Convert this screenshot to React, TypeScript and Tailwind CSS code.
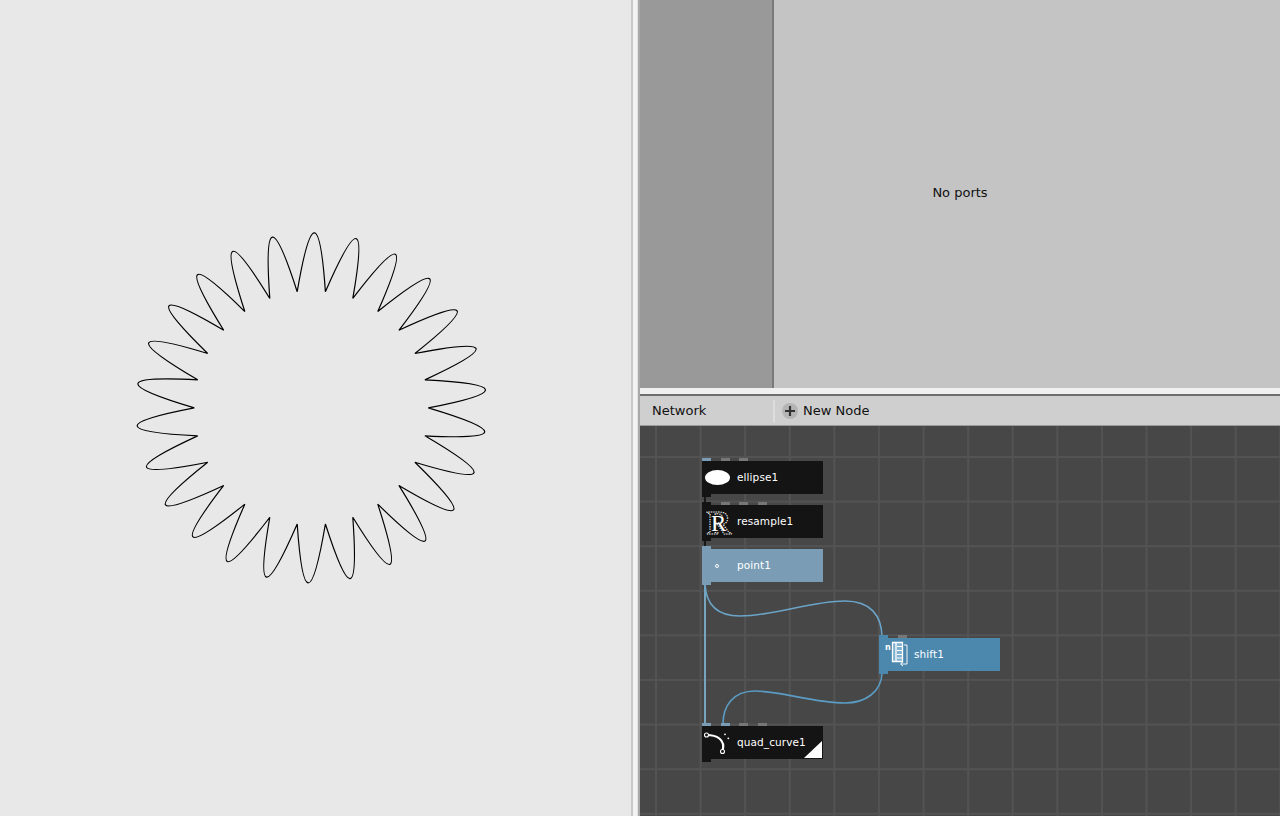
import React from 'react';

// star: 26 points on a circle, each lobe one quadratic with a rotating control point
const starPath = () => {
  const cx = 311.3;
  const cy = 407.85;
  const r = 117;
  const rc = 234;
  const skew = 6;
  const step = (Math.PI * 2) / 26;
  const pt = (i: number) => [cx + r * Math.cos(Math.PI + i * step), cy + r * Math.sin(Math.PI + i * step)];
  let d = `M${pt(0)[0].toFixed(2)} ${pt(0)[1].toFixed(2)}`;
  for (let i = 0; i < 26; i++) {
    const m = Math.PI + (i + 0.5) * step;
    const qx = cx + rc * Math.cos(m) - skew * Math.sin(m);
    const qy = cy + rc * Math.sin(m) + skew * Math.cos(m);
    const b = pt(i + 1);
    d += ` Q${qx.toFixed(2)} ${qy.toFixed(2)} ${b[0].toFixed(2)} ${b[1].toFixed(2)}`;
  }
  return d + 'Z';
};

type NodeProps = {
  name: string;
  x: number;
  y: number;
  bg: string;
  ports: string[];
  icon: React.ReactNode;
  tabColor: string;
  children?: React.ReactNode;
};

const Node = ({ name, x, y, bg, ports, icon, tabColor, children }: NodeProps) => (
  <div className="absolute w-[121px]" style={{ left: x, top: y - 3 }}>
    <div className="flex gap-[9.5px] h-[3px]">
      {ports.map((p, i) => (
        <div key={i} className={`w-[9px] h-[3px] ${p}`}></div>
      ))}
    </div>
    <div className={`relative h-[33px] flex items-center ${bg}`}>
      <div className="w-[35px] h-full relative shrink-0">{icon}</div>
      <span className="text-[10.5px] tracking-[0.1px] text-white font-['DejaVu_Sans',sans-serif] leading-none">{name}</span>
      {children}
    </div>
    <div className={`w-[9px] h-[3px] ${tabColor}`}></div>
  </div>
);

export default function App() {
  return (
    <div className="w-[1280px] h-[816px] flex overflow-hidden bg-[#e8e8e8] font-['DejaVu_Sans',sans-serif]">
      {/* Viewer */}
      <div className="w-[631px] h-full bg-[#e8e8e8] relative shrink-0">
        <svg className="absolute inset-0" width="631" height="816" viewBox="0 0 631 816">
          <path d={starPath()} fill="none" stroke="#000" strokeWidth="1.2" strokeLinejoin="miter" />
        </svg>
      </div>

      {/* Splitter */}
      <div className="w-[9px] h-full flex shrink-0">
        <div className="w-[2px] bg-[#c8c8c8]"></div>
        <div className="w-[4px] bg-[#f2f2f2]"></div>
        <div className="w-[1px] bg-[#e2e2e2]"></div>
        <div className="w-[2px] bg-[#a8a8a8]"></div>
      </div>

      <div className="flex-1 flex flex-col min-w-0">
        {/* Port panel */}
        <div className="h-[388px] flex shrink-0">
          <div className="w-[134px] bg-[#999999] border-r-2 border-[#7a7a7a]"></div>
          <div className="flex-1 bg-[#c4c4c4] flex items-center justify-center pb-[3px] pr-[134px]">
            <span className="text-[13px] text-[#111111]">No ports</span>
          </div>
        </div>

        {/* Splitter */}
        <div className="h-[8px] bg-[#f0f0f0] border-b-2 border-[#6e6e6e] shrink-0"></div>

        {/* Network header */}
        <div className="h-[30px] flex items-center bg-[#cfcfcf] border-b border-[#9a9a9a] shrink-0">
          <div className="w-[135px] h-[22px] flex items-center pl-[12px] border-r-2 border-[#dedede]">
            <span className="text-[13px] text-[#111111]">Network</span>
          </div>
          <div className="flex items-center pl-[7px] gap-[5px]">
            <div className="w-[16px] h-[16px] rounded-full bg-[#b4b4b4] flex items-center justify-center">
              <svg width="10" height="10" viewBox="0 0 10 10">
                <path d="M5 0v10M0 5h10" stroke="#333" strokeWidth="2.2" />
              </svg>
            </div>
            <span className="text-[13px] text-[#111111]">New Node</span>
          </div>
        </div>

        {/* Network canvas */}
        <div className="flex-1 relative bg-[#474747] bg-[linear-gradient(to_right,#535353_1.5px,transparent_1.5px),linear-gradient(to_bottom,#535353_1.5px,transparent_1.5px)] bg-[size:44.6px_44.6px] bg-[position:15px_30px]">
          {/* wires */}
          <svg className="absolute inset-0 pointer-events-none" width="640" height="390" viewBox="640 426 640 390">
            <path d="M705 497V505M705 541V549" fill="none" stroke="#141414" strokeWidth="1.8" />
            <path d="M705 584V726" fill="none" stroke="#7db0cc" strokeWidth="1.8" />
            <path d="M705 584C706 605 718 616 740 616C775 616 810 601 845 601C870 601 882 615 882 638" fill="none" stroke="#6ba4c8" strokeWidth="1.6" />
            <path d="M882 672C882 692 865 703 845 703C815 703 780 691 755 691C733 691 723 706 723 724" fill="none" stroke="#5b9cc4" strokeWidth="1.6" />
          </svg>

          <Node
            name="ellipse1"
            x={62}
            y={35}
            bg="bg-[#141414]"
            ports={['bg-[#7a9db5]', 'bg-[#777777]', 'bg-[#777777]']}
            tabColor="bg-[#141414]"
            icon={<div className="absolute left-[3px] top-[9px] w-[25px] h-[15px] rounded-[50%] bg-white"></div>}
          />
          <Node
            name="resample1"
            x={62}
            y={79}
            bg="bg-[#141414]"
            ports={['bg-[#141414]', 'bg-[#777777]', 'bg-[#777777]', 'bg-[#777777]']}
            tabColor="bg-[#141414]"
            icon={
              <svg className="absolute left-0 top-[-6px] overflow-visible" width="35" height="46" viewBox="0 0 35 46">
                <text x="4.5" y="35" fontSize="34" fontWeight="700" fontFamily="'Liberation Serif', serif" fill="none" stroke="#fff" strokeWidth="1" strokeDasharray="1.3 1.1">R</text>
                <text x="9" y="32" fontSize="23" fontFamily="'Liberation Serif', serif" fill="#fff">R</text>
              </svg>
            }
          />
          <Node
            name="point1"
            x={62}
            y={123}
            bg="bg-[#7a9db5]"
            ports={['bg-[#7a9db5]']}
            tabColor="bg-[#7a9db5]"
            icon={<div className="absolute left-[13px] top-[15px] w-[4px] h-[4px] rounded-full border border-white"></div>}
          />
          <Node
            name="shift1"
            x={239}
            y={212}
            bg="bg-[#4c88ae]"
            ports={['bg-[#4c88ae]', 'bg-[#777777]']}
            tabColor="bg-[#4c88ae]"
            icon={
              <svg className="absolute left-0 top-0" width="35" height="33" viewBox="0 0 35 33">
                <text x="6" y="12" fontSize="8" fontWeight="700" fontFamily="'DejaVu Sans', sans-serif" fill="#fff">n</text>
                <path d="M13.5 4.5h10v19h-10z" fill="#7fb0cf" stroke="#fff" strokeWidth="1.3" />
                <path d="M17 5v18" stroke="#fff" strokeWidth="1.3" />
                <path d="M18 8.5h5M18 12.5h5M18 16.5h5M18 20h5" stroke="#fff" strokeWidth="1" />
                <path d="M25 7h3v19h-6" fill="none" stroke="#fff" strokeWidth="0.9" />
                <path d="M24 24l-2.5 2 2.5 2" fill="none" stroke="#fff" strokeWidth="0.9" />
              </svg>
            }
          />
          <Node
            name="quad_curve1"
            x={62}
            y={300}
            bg="bg-[#141414]"
            ports={['bg-[#7a9db5]', 'bg-[#7a9db5]', 'bg-[#777777]', 'bg-[#777777]']}
            tabColor="bg-[#141414]"
            icon={
              <svg className="absolute left-0 top-0" width="35" height="33" viewBox="0 0 35 33">
                <path d="M4.5 9C14 9 24 13 20.5 25" fill="none" stroke="#fff" strokeWidth="2.2" />
                <circle cx="4.5" cy="9" r="2" fill="#141414" stroke="#fff" strokeWidth="1.1" />
                <circle cx="20.5" cy="25.5" r="2" fill="#141414" stroke="#fff" strokeWidth="1.1" />
                <circle cx="26.3" cy="12.3" r="0.9" fill="#fff" />
                <circle cx="23" cy="8.3" r="0.9" fill="#fff" />
              </svg>
            }
          >
            <svg className="absolute right-[1px] bottom-[1px]" width="18" height="17" viewBox="0 0 18 17">
              <path d="M18 0V17H0Z" fill="#fff" />
            </svg>
          </Node>
        </div>
      </div>
    </div>
  );
}
